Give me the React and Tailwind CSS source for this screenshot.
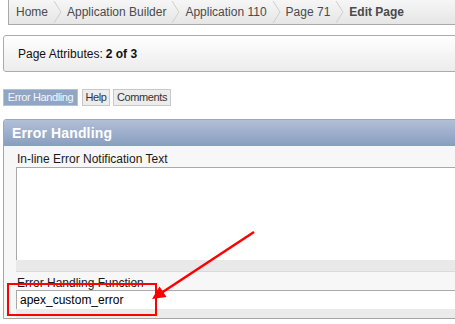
import React from 'react';

const crumbs = ['Home', 'Application Builder', 'Application 110', 'Page 71'];

const Chevron = () => (
  <svg width="9" height="24" viewBox="0 0 9 24" className="mx-[5px] shrink-0">
    <polyline points="1,1 8,12 1,23" fill="none" stroke="#cfcfcf" strokeWidth="1" />
  </svg>
);

const App = () => {
  return (
    <div
      className="relative w-[455px] h-[324px] overflow-hidden bg-white text-[#222]"
      style={{ fontFamily: '"Liberation Sans", Arial, sans-serif' }}
    >
      <div className="w-[620px]">
        {/* breadcrumb */}
        <div className="ml-[8px] h-[25px] flex items-center pl-[7px] border-l border-b border-[#a9a9a9] bg-gradient-to-b from-[#f6f6f6] to-[#e6e6e6] text-[12px] text-[#4a4a4a]">
          {crumbs.map((c) => (
            <React.Fragment key={c}>
              <span className="whitespace-nowrap">{c}</span>
              <Chevron />
            </React.Fragment>
          ))}
          <span className="font-bold whitespace-nowrap">Edit Page</span>
        </div>

        {/* page attributes */}
        <div className="mt-[10px] ml-[3px] h-[37px] flex items-center pl-[14px] border border-[#ababab] rounded-[3px] bg-gradient-to-b from-[#ffffff] to-[#ececec] text-[12px] text-[#111]">
          Page Attributes: <span className="font-bold ml-[3px]">2 of 3</span>
        </div>

        {/* tabs */}
        <div className="mt-[17px] ml-[3px] flex gap-[4px] text-[11px] tracking-[-0.4px]">
          <div className="w-[75px] h-[17px] flex items-center justify-center bg-[#91a5c4] border border-[#b4c1d6] text-[#f4f6fa]">
            Error Handling
          </div>
          <div className="w-[28px] h-[17px] flex items-center justify-center bg-[#ececec] border border-[#c9c9c9] text-[#333]">
            Help
          </div>
          <div className="w-[58px] h-[17px] -ml-[1px] flex items-center justify-center bg-[#ececec] border border-[#c9c9c9] text-[#333]">
            Comments
          </div>
        </div>

        {/* region */}
        <div className="mt-[13px] ml-[3px] border border-[#a6a6a6] rounded-t-[3px] bg-[#f7f7f7]">
          <div className="h-[26px] flex items-center pl-[8px] bg-gradient-to-b from-[#b2bfd8] to-[#889ebe] text-white font-bold text-[14px] tracking-[0.15px]">
            Error Handling
          </div>
          <div className="pt-[6px] pb-0">
            <div className="pl-[13px] text-[12px] leading-[14px] text-[#1a1a1a]">In-line Error Notification Text</div>
            <div className="mt-[1px] ml-[12px] h-[93px] bg-white border-t border-l border-[#a9a9a9]" />
            <div className="ml-[12px] h-[12px] bg-[#e9e9e9] border-b border-[#dadada]" />
            <div className="h-[18px] pl-[13px] flex items-end text-[12px] leading-[14px] text-[#1a1a1a]">
              Error Handling Function
            </div>
            <div className="ml-[12px] h-[19px] flex items-center pl-[3px] bg-white border-t border-l border-[#a9a9a9] text-[12px] text-black">
              apex_custom_error
            </div>
            <div className="ml-[12px] h-[9px] bg-[#ebebeb]" />
          </div>
        </div>
      </div>

      {/* annotation */}
      <div className="absolute left-[7px] top-[283px] w-[150px] h-[33px] border-2 border-[#ff0000]" />
      <svg className="absolute left-0 top-0" width="455" height="324">
        <line x1="254" y1="232" x2="162" y2="292.5" stroke="#ff0000" strokeWidth="2.5" />
        <polygon points="152,299 166.5,297 159.5,286.5" fill="#ff0000" />
      </svg>
    </div>
  );
};

export default App;
